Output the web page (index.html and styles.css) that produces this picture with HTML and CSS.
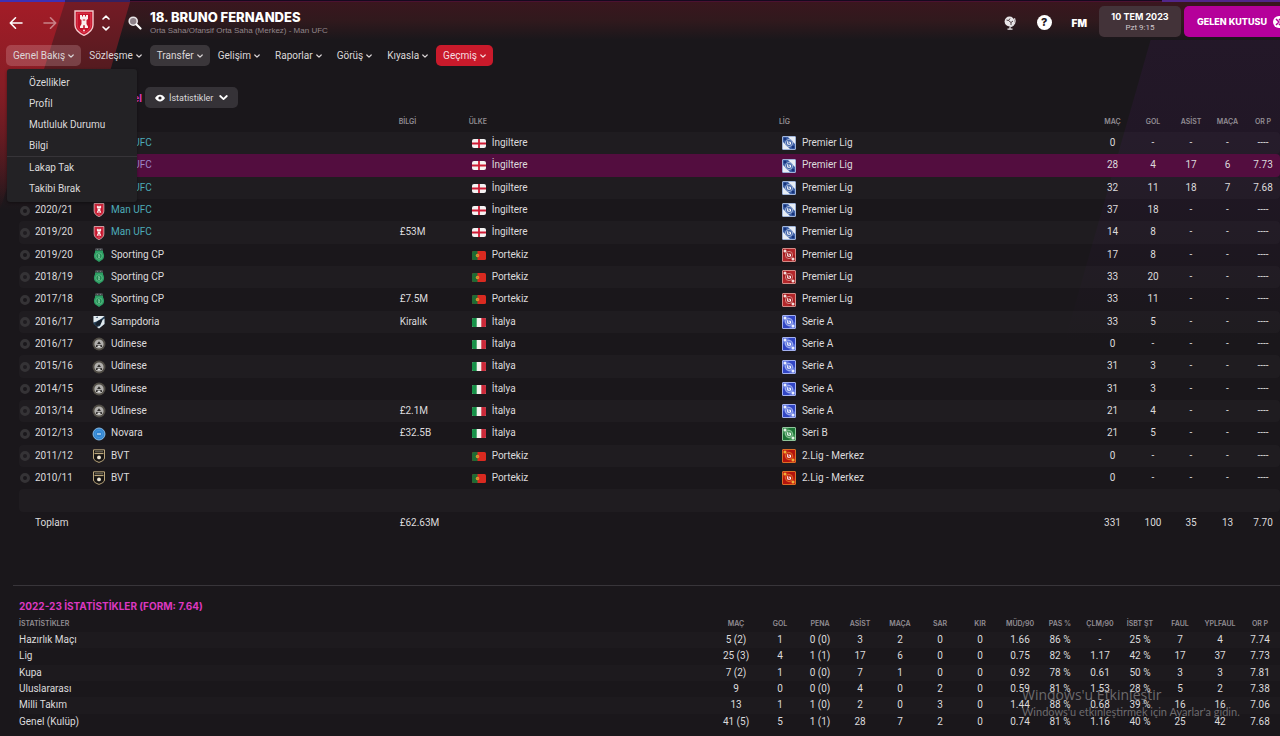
FILE: index.html
```html
<!DOCTYPE html>
<html lang="tr">
<head>
<meta charset="utf-8">
<title>Bruno Fernandes - Geçmiş</title>
<meta name="viewport" content="width=device-width, initial-scale=1">
<link rel="stylesheet" href="styles.css">
</head>
<body>
<svg class="defs" aria-hidden="true">
  <symbol id="chev" viewBox="0 0 6 6"><path d="M.8 2 3 4.1 5.2 2" fill="none" stroke="currentColor" stroke-width="1.2" stroke-linecap="round" stroke-linejoin="round"/></symbol>
  <symbol id="united" viewBox="0 0 20 26"><path d="M1 1h18v14c0 5-4 8-9 10.300C5 23 1 20 1 15z" fill="#c5122b" stroke="#f3c9cc" stroke-width="1.400"/><path d="M3.200 3.200h13.600v11.500c0 4-3 6.300-6.800 8.100-3.800-1.800-6.800-4.100-6.800-8.100z" fill="none" stroke="#ea5a68" stroke-width=".6"/><path d="M6 5h2v1.500h1V5h2v1.500h1V5h2v4l-1.500 1v4l1.500 2.500V18H6v-1.500L7.500 14v-4L6 9z" fill="#fbeeee"/><path d="M9.200 18v-2.500q.8-1 1.600 0V18zM8.800 9.500h2.400v.9H8.800z" fill="#c5122b"/><circle cx="10" cy="20.500" r=".9" fill="#fbeeee"/></symbol>
  <symbol id="sporting" viewBox="0 0 14 14"><path d="M3.500.5h7v1.800h-7z" fill="#777b80"/><path d="M4 1.300h1m1 0h2m1 0h1" stroke="#23282a" stroke-width=".7"/><path d="M3 2.500h8v1.800c1.400 2 1.500 5.200 0 7L7 14l-4-2.700c-1.500-1.800-1.400-5 0-7z" fill="#2c9e63"/><circle cx="7" cy="8" r="3.200" fill="#238b54" stroke="#7cd09e" stroke-width=".6"/><path d="M6 6.300h1.300l.8 1-.8.6.9 1.800H6l.6-1.600z" fill="#8bd6ab"/></symbol>
  <symbol id="samp" viewBox="0 0 14 14"><path d="M1.500 1h11v8L7 13.500 1.500 9z" fill="#29445d"/><path d="M1.500 1h11L9 4 4.500 6.500l-3 1z" fill="#e6edf1"/><path d="m3 9 3-3 4-2 .8 3L8 10l-3 1z" fill="#16202c"/><path d="m10.500 5 2-1.600V9L7 13.500l-2-1.600 3-1z" fill="#dfe8ed"/><path d="m3.500 2.500 2-1 .5 1.500z" fill="#29445d"/></symbol>
  <symbol id="udinese" viewBox="0 0 14 14"><circle cx="7" cy="7" r="6.500" fill="#514d46"/><circle cx="7" cy="7" r="4.600" fill="#b2b0ad"/><path d="M4 8.500 7 4.300l3 4.200v1.600H8.600L7 7.800l-1.600 2.300H4z" fill="#2e2c2a"/><path d="M4.500 7.700h5M5.600 9.500h2.800" stroke="#eee" stroke-width=".8"/></symbol>
  <symbol id="novara" viewBox="0 0 14 14"><circle cx="7" cy="7" r="6" fill="#3687d0" stroke="#8dc3ef" stroke-width=".9"/><circle cx="7" cy="7" r="3.700" fill="#2d83d2" stroke="#5ba7e5" stroke-width=".5"/><path d="M5 6.400h4v1.200H5z" fill="#d4e6f5"/></symbol>
  <symbol id="bvt" viewBox="0 0 14 14"><path d="M1.500.8h11v8.200c0 2-2.500 3.300-5.500 4.400C4 12.300 1.500 11 1.500 9z" fill="#171514" stroke="#bba77c" stroke-width="1"/><path d="M2.500 3.800h9v1.300h-9z" fill="#bba77c"/><path d="M3.500 2.400h1m1 0h1m1 0h1m1 0h1" stroke="#d8cfb8" stroke-width=".8"/><circle cx="7" cy="8.400" r="1.900" fill="#eee6d4"/></symbol>
  <symbol id="eng" viewBox="0 0 14 9"><rect width="14" height="9" rx="2" fill="#f4f2f2"/><path d="M7 0v9M0 4.500h14" stroke="#cf1b35" stroke-width="1.800"/></symbol>
  <symbol id="por" viewBox="0 0 14 9"><rect width="14" height="9" rx="1.500" fill="#d92a20"/><path d="M5.500 0v9h-4A1.500 1.500 0 0 1 0 7.500v-6A1.500 1.500 0 0 1 1.500 0z" fill="#1d6b34"/><circle cx="5.500" cy="4.500" r="1.700" fill="#d6a428"/><circle cx="5.500" cy="4.500" r=".8" fill="#e4564d"/></symbol>
  <symbol id="ita" viewBox="0 0 14 9"><rect width="14" height="9" rx="1.500" fill="#f2f2ee"/><path d="M4.700 0v9H1.500A1.500 1.500 0 0 1 0 7.500v-6A1.500 1.500 0 0 1 1.500 0z" fill="#179148"/><path d="M9.300 0v9h3.200A1.500 1.500 0 0 0 14 7.500v-6A1.500 1.500 0 0 0 12.500 0z" fill="#cb2a3a"/></symbol>
  <symbol id="league" viewBox="0 0 14 14"><rect x=".5" y=".5" width="13" height="13" rx=".5" class="lg-base"/><path d="M6 1h7v7zM1 6v7h7z" class="lg-corner"/><circle cx="7" cy="7" r="3.600" class="lg-ring"/><path d="M5.700 5.200v3h2.800V6.200H6.800" class="lg-mark"/><circle cx="3" cy="3" r="1.500" class="lg-dot"/><circle cx="11" cy="11" r="1.500" class="lg-dot"/></symbol>
</svg>

<svg class="backdrop" viewBox="0 0 1280 736" preserveAspectRatio="none" aria-hidden="true">
  <defs>
    <linearGradient id="gTop" x2="0" y2="1"><stop offset="0" stop-color="#3a161e"/><stop offset=".5" stop-color="#30191d"/><stop offset="1" stop-color="#1a171b"/></linearGradient>
    <linearGradient id="gRed" x2="0" y2="1"><stop offset="0" stop-color="#a31c27"/><stop offset=".4" stop-color="#861d25"/><stop offset="1" stop-color="#861d25" stop-opacity="0"/></linearGradient>
    <linearGradient id="gRed2" x2="0" y2="1"><stop offset="0" stop-color="#741b25"/><stop offset=".3" stop-color="#571b20"/><stop offset="1" stop-color="#571b20" stop-opacity="0"/></linearGradient>
    <linearGradient id="gPur" x2="0" y2="1"><stop offset="0" stop-color="#241829"/><stop offset=".4" stop-color="#211726"/><stop offset="1" stop-color="#211726" stop-opacity="0"/></linearGradient>
  </defs>
  <path d="M1162 0h118v340H1065z" fill="url(#gPur)"/>
  <path d="M0 2h1280v38H0z" fill="url(#gTop)"/>
  <path d="M0 2h130L70 210H0z" fill="url(#gRed2)"/>
  <path d="M0 2h65L0 210z" fill="url(#gRed)"/>
  <path d="M0 0h1280v1H0z" fill="#16081f"/><path d="M0 1h1280v1H0z" fill="#4b1130"/>
  <path d="M0 0h65v2H0z" fill="#4030b4"/><path d="M65 0h65v2H65z" fill="#352060"/><path d="M1162 0h118v2h-118z" fill="#51268a"/>
</svg>

<header class="topbar">
  <button class="icon-btn nav-btn" aria-label="Geri"><svg width="14" height="14" viewBox="0 0 14 14"><path d="M13 7H1.500M6.500 1.800 1.300 7l5.200 5.200" class="line"/></svg></button>
  <button class="icon-btn nav-btn fwd" aria-label="İleri"><svg width="14" height="14" viewBox="0 0 14 14"><path d="M1 7h11.500M7.500 1.800 12.700 7l-5.200 5.200" class="line"/></svg></button>
  <svg class="badge" width="20" height="26"><use href="#united"/></svg>
  <button class="icon-btn sorter" aria-label="Önceki veya sonraki oyuncu"><svg width="8" height="16" viewBox="0 0 8 16"><path d="m1 4 3-2.800L7 4M1 12l3 2.800L7 12" class="line"/></svg></button>
  <button class="icon-btn search" aria-label="Ara"><svg width="14" height="14" viewBox="0 0 14 14"><circle cx="5.200" cy="5.200" r="4" fill="#8d8188" stroke="#e8e4e6" stroke-width="1.600"/><path d="m8.500 8.500 4 4" stroke="#fff" stroke-width="2.200" stroke-linecap="round"/></svg></button>
  <div class="who">
    <h1>18. BRUNO FERNANDES</h1>
    <p>Orta Saha/Ofansif Orta Saha (Merkez) - Man UFC</p>
  </div>
  <div class="tools">
    <button class="icon-btn" aria-label="Dünya"><svg width="14" height="14" viewBox="0 0 14 14"><circle cx="6.500" cy="5.500" r="4.900" fill="#e9e6e8"/><path d="m3.500 4 2 .5L7 2.500M5.500 4.500l2.500 2 2-1.500M8 6.500V9" stroke="#3b2a30" fill="none" stroke-width=".9"/><path d="M11.500 2.200c1.300 3 .5 7.300-4.500 8.800v1.800M4.500 13.100h5" fill="none" stroke="#e9e6e8" stroke-width="1.200"/></svg></button>
    <button class="icon-btn help" aria-label="Yardım">?</button>
    <button class="icon-btn fm">FM</button>
  </div>
  <div class="actions">
    <button class="date"><strong>10 TEM 2023</strong><span>Pzt 9:15</span></button>
    <button class="inbox"><span>GELEN KUTUSU</span><svg width="14" height="14" viewBox="0 0 14 14"><circle cx="7" cy="7" r="6" fill="#fff"/><path d="m4 4 3 3-3 3M7 4l3 3-3 3" fill="none" stroke="#b5009a" stroke-width="1.500"/></svg></button>
  </div>
</header>

<nav class="tabs">
  <div class="tab-wrap">
    <button class="tab open" aria-expanded="true">Genel Bakış<svg><use href="#chev"/></svg></button>
    <div class="menu">
      <a href="#">Özellikler</a><a href="#">Profil</a><a href="#">Mutluluk Durumu</a><a href="#">Bilgi</a>
      <hr>
      <a href="#">Lakap Tak</a><a href="#">Takibi Bırak</a>
    </div>
  </div>
  <button class="tab">Sözleşme<svg><use href="#chev"/></svg></button>
  <button class="tab soft">Transfer<svg><use href="#chev"/></svg></button>
  <button class="tab">Gelişim<svg><use href="#chev"/></svg></button>
  <button class="tab">Raporlar<svg><use href="#chev"/></svg></button>
  <button class="tab">Görüş<svg><use href="#chev"/></svg></button>
  <button class="tab">Kıyasla<svg><use href="#chev"/></svg></button>
  <button class="tab active">Geçmiş<svg><use href="#chev"/></svg></button>
</nav>

<main>
  <div class="subhead">
    <h2>Genel</h2>
    <button class="view"><svg width="10" height="8" viewBox="0 0 10 8"><path d="M0 4c2.500-4.500 7.500-4.500 10 0-2.500 4.500-7.500 4.500-10 0z" fill="#fff"/><circle cx="5" cy="4" r="1.600" fill="#2c272c"/></svg>İstatistikler<svg width="9" height="9" class="down"><use href="#chev"/></svg></button>
  </div>

  <table class="history">
    <colgroup><col class="c-season"><col class="c-club"><col class="c-info"><col class="c-land"><col><col class="c-mac"><col class="c-gol"><col class="c-asist"><col class="c-maca"><col class="c-orp"></colgroup>
    <thead><tr><th></th><th></th><th>BİLGİ</th><th>ÜLKE</th><th>LİG</th><th>MAÇ</th><th>GOL</th><th>ASİST</th><th>MAÇA</th><th>OR P</th></tr></thead>
    <tbody>
      <tr><td><i class="dot"></i></td><td class="mine"><svg class="crest"><use href="#united"/></svg>Man UFC</td><td></td><td><svg class="flag"><use href="#eng"/></svg>İngiltere</td><td><svg class="lg navy"><use href="#league"/></svg>Premier Lig</td><td>0</td><td>-</td><td>-</td><td>-</td><td>----</td></tr>
      <tr class="sel"><td><i class="dot"></i></td><td class="mine"><svg class="crest"><use href="#united"/></svg>Man UFC</td><td></td><td><svg class="flag"><use href="#eng"/></svg>İngiltere</td><td><svg class="lg navy"><use href="#league"/></svg>Premier Lig</td><td>28</td><td>4</td><td>17</td><td>6</td><td>7.73</td></tr>
      <tr><td><i class="dot"></i></td><td class="mine"><svg class="crest"><use href="#united"/></svg>Man UFC</td><td></td><td><svg class="flag"><use href="#eng"/></svg>İngiltere</td><td><svg class="lg navy"><use href="#league"/></svg>Premier Lig</td><td>32</td><td>11</td><td>18</td><td>7</td><td>7.68</td></tr>
      <tr><td><i class="dot"></i>2020/21</td><td class="mine"><svg class="crest"><use href="#united"/></svg>Man UFC</td><td></td><td><svg class="flag"><use href="#eng"/></svg>İngiltere</td><td><svg class="lg navy"><use href="#league"/></svg>Premier Lig</td><td>37</td><td>18</td><td>-</td><td>-</td><td>----</td></tr>
      <tr><td><i class="dot"></i>2019/20</td><td class="mine"><svg class="crest"><use href="#united"/></svg>Man UFC</td><td>£53M</td><td><svg class="flag"><use href="#eng"/></svg>İngiltere</td><td><svg class="lg navy"><use href="#league"/></svg>Premier Lig</td><td>14</td><td>8</td><td>-</td><td>-</td><td>----</td></tr>
      <tr><td><i class="dot"></i>2019/20</td><td><svg class="crest"><use href="#sporting"/></svg>Sporting CP</td><td></td><td><svg class="flag"><use href="#por"/></svg>Portekiz</td><td><svg class="lg red"><use href="#league"/></svg>Premier Lig</td><td>17</td><td>8</td><td>-</td><td>-</td><td>----</td></tr>
      <tr><td><i class="dot"></i>2018/19</td><td><svg class="crest"><use href="#sporting"/></svg>Sporting CP</td><td></td><td><svg class="flag"><use href="#por"/></svg>Portekiz</td><td><svg class="lg red"><use href="#league"/></svg>Premier Lig</td><td>33</td><td>20</td><td>-</td><td>-</td><td>----</td></tr>
      <tr><td><i class="dot"></i>2017/18</td><td><svg class="crest"><use href="#sporting"/></svg>Sporting CP</td><td>£7.5M</td><td><svg class="flag"><use href="#por"/></svg>Portekiz</td><td><svg class="lg red"><use href="#league"/></svg>Premier Lig</td><td>33</td><td>11</td><td>-</td><td>-</td><td>----</td></tr>
      <tr><td><i class="dot"></i>2016/17</td><td><svg class="crest"><use href="#samp"/></svg>Sampdoria</td><td>Kiralık</td><td><svg class="flag"><use href="#ita"/></svg>İtalya</td><td><svg class="lg blue"><use href="#league"/></svg>Serie A</td><td>33</td><td>5</td><td>-</td><td>-</td><td>----</td></tr>
      <tr><td><i class="dot"></i>2016/17</td><td><svg class="crest"><use href="#udinese"/></svg>Udinese</td><td></td><td><svg class="flag"><use href="#ita"/></svg>İtalya</td><td><svg class="lg blue"><use href="#league"/></svg>Serie A</td><td>0</td><td>-</td><td>-</td><td>-</td><td>----</td></tr>
      <tr><td><i class="dot"></i>2015/16</td><td><svg class="crest"><use href="#udinese"/></svg>Udinese</td><td></td><td><svg class="flag"><use href="#ita"/></svg>İtalya</td><td><svg class="lg blue"><use href="#league"/></svg>Serie A</td><td>31</td><td>3</td><td>-</td><td>-</td><td>----</td></tr>
      <tr><td><i class="dot"></i>2014/15</td><td><svg class="crest"><use href="#udinese"/></svg>Udinese</td><td></td><td><svg class="flag"><use href="#ita"/></svg>İtalya</td><td><svg class="lg blue"><use href="#league"/></svg>Serie A</td><td>31</td><td>3</td><td>-</td><td>-</td><td>----</td></tr>
      <tr><td><i class="dot"></i>2013/14</td><td><svg class="crest"><use href="#udinese"/></svg>Udinese</td><td>£2.1M</td><td><svg class="flag"><use href="#ita"/></svg>İtalya</td><td><svg class="lg blue"><use href="#league"/></svg>Serie A</td><td>21</td><td>4</td><td>-</td><td>-</td><td>----</td></tr>
      <tr><td><i class="dot"></i>2012/13</td><td><svg class="crest"><use href="#novara"/></svg>Novara</td><td>£32.5B</td><td><svg class="flag"><use href="#ita"/></svg>İtalya</td><td><svg class="lg green"><use href="#league"/></svg>Seri B</td><td>21</td><td>5</td><td>-</td><td>-</td><td>----</td></tr>
      <tr><td><i class="dot"></i>2011/12</td><td><svg class="crest"><use href="#bvt"/></svg>BVT</td><td></td><td><svg class="flag"><use href="#por"/></svg>Portekiz</td><td><svg class="lg orange"><use href="#league"/></svg>2.Lig - Merkez</td><td>0</td><td>-</td><td>-</td><td>-</td><td>----</td></tr>
      <tr><td><i class="dot"></i>2010/11</td><td><svg class="crest"><use href="#bvt"/></svg>BVT</td><td></td><td><svg class="flag"><use href="#por"/></svg>Portekiz</td><td><svg class="lg orange"><use href="#league"/></svg>2.Lig - Merkez</td><td>0</td><td>-</td><td>-</td><td>-</td><td>----</td></tr>
      <tr><td></td><td></td><td></td><td></td><td></td><td></td><td></td><td></td><td></td><td></td></tr>
      <tr class="total"><td>Toplam</td><td></td><td>£62.63M</td><td></td><td></td><td>331</td><td>100</td><td>35</td><td>13</td><td>7.70</td></tr>
    </tbody>
  </table>

  <section class="season">
    <h2>2022-23 İSTATİSTİKLER (FORM: 7.64)</h2>
    <table class="stats">
      <colgroup><col><col class="c-first"><col class="c-n" span="13"></colgroup>
      <thead><tr><th>İSTATİSTİKLER</th><th>MAÇ</th><th>GOL</th><th>PENA</th><th>ASİST</th><th>MAÇA</th><th>SAR</th><th>KIR</th><th>MÜD/90</th><th>PAS %</th><th>ÇLM/90</th><th>İSBT ŞT</th><th>FAUL</th><th>YPLFAUL</th><th>OR P</th></tr></thead>
      <tbody>
        <tr><td>Hazırlık Maçı</td><td>5 (2)</td><td>1</td><td>0 (0)</td><td>3</td><td>2</td><td>0</td><td>0</td><td>1.66</td><td>86 %</td><td>-</td><td>25 %</td><td>7</td><td>4</td><td>7.74</td></tr>
        <tr><td>Lig</td><td>25 (3)</td><td>4</td><td>1 (1)</td><td>17</td><td>6</td><td>0</td><td>0</td><td>0.75</td><td>82 %</td><td>1.17</td><td>42 %</td><td>17</td><td>37</td><td>7.73</td></tr>
        <tr><td>Kupa</td><td>7 (2)</td><td>1</td><td>0 (0)</td><td>7</td><td>1</td><td>0</td><td>0</td><td>0.92</td><td>78 %</td><td>0.61</td><td>50 %</td><td>3</td><td>3</td><td>7.81</td></tr>
        <tr><td>Uluslararası</td><td>9</td><td>0</td><td>0 (0)</td><td>4</td><td>0</td><td>2</td><td>0</td><td>0.59</td><td>81 %</td><td>1.53</td><td>28 %</td><td>5</td><td>2</td><td>7.38</td></tr>
        <tr><td>Milli Takım</td><td>13</td><td>1</td><td>1 (0)</td><td>2</td><td>0</td><td>3</td><td>0</td><td>1.44</td><td>88 %</td><td>0.68</td><td>39 %</td><td>16</td><td>16</td><td>7.06</td></tr>
        <tr><td>Genel (Kulüp)</td><td>41 (5)</td><td>5</td><td>1 (1)</td><td>28</td><td>7</td><td>2</td><td>0</td><td>0.74</td><td>81 %</td><td>1.16</td><td>40 %</td><td>25</td><td>42</td><td>7.68</td></tr>
      </tbody>
    </table>
  </section>
</main>

<aside class="activate">
  <strong>Windows'u Etkinleştir</strong>
  <span>Windows'u etkinleştirmek için Ayarlar'a gidin.</span>
</aside>
</body>
</html>
```
FILE: styles.css
```css
* { box-sizing: border-box; }
html, body { min-height: 100%; }
body {
  margin: 0;
  min-height: 100vh;
  position: relative;
  overflow: hidden;
  background: #1a171b;
  color: #dcdadc;
  font: 10px/14px Roboto, "Liberation Sans", sans-serif;
}
button { margin: 0; padding: 0; border: 0; background: none; color: inherit; font: inherit; cursor: pointer; }
a { color: inherit; text-decoration: none; }
h1, h2, p { margin: 0; }
.defs { position: absolute; width: 0; height: 0; }
.backdrop { position: absolute; inset: 0; width: 100%; height: 100%; z-index: -1; }
.line { fill: none; stroke: #fff; stroke-width: 1.6; stroke-linecap: round; stroke-linejoin: round; }

/* Top bar */
.topbar { display: flex; align-items: center; height: 45px; padding-left: 9px; white-space: nowrap; overflow: hidden; }
.icon-btn { display: flex; align-items: center; justify-content: center; flex: none; }
.fwd { margin-left: 20px; opacity: .45; }
.badge { flex: none; margin-left: 17px; }
.sorter { margin-left: 8px; }
.search { margin-left: 18px; }
.who { margin: 2px auto 0 8px; }
.who h1 { color: #fff; font: 800 13px/15px Inter, sans-serif; }
.who p { color: #91868b; font: 8px/12px "Liberation Sans", sans-serif; }
.tools { display: flex; align-items: center; gap: 20px; }
.help { width: 15px; height: 15px; border-radius: 50%; background: #fff; color: #241a1f; font: 800 11px/15px Inter, sans-serif; }
.fm { color: #fff; font: 900 10px/14px Inter, sans-serif; }
.actions { display: flex; gap: 3px; margin: -2px -6px 0 12px; }
.date { display: flex; flex-direction: column; align-items: center; justify-content: center; width: 82px; height: 31px; border-radius: 5px; background: #433339; color: #d0c8cc; font-size: 8px; line-height: 11px; }
.date strong { color: #fff; font: 700 9px/11px Inter, sans-serif; }
.inbox { display: flex; align-items: center; gap: 5px; height: 31px; padding: 0 0 0 13px; border-radius: 5px; background: #b5009a; color: #fff; font: 800 9px/12px Inter, sans-serif; }

/* Section tabs */
.tabs { display: flex; gap: 1px; padding-left: 6px; height: 21px; white-space: nowrap; }
.tab { display: flex; align-items: center; gap: 3px; height: 21px; padding: 0 7px; border-radius: 5px; color: #dcd7d9; }
.tab svg { width: 6px; height: 6px; }
.tab.open { background: rgba(255, 220, 225, .2); }
.tab.soft { background: #3a363a; }
.tab.active { background: #c91a2b; color: #f6dfe0; }
.tab-wrap { position: relative; }
.menu { position: absolute; left: 1px; top: 24px; z-index: 2; width: 130px; padding: 3px 0; border-radius: 3px; background: #232225; box-shadow: 0 1px 3px rgba(0, 0, 0, .4); }
.menu a { display: block; padding-left: 22px; line-height: 21px; }
.menu hr { margin: 0; border: 0; border-top: 1px solid #363438; }

/* Sub header */
.subhead { display: flex; align-items: center; gap: 3px; padding: 21px 0 3px 19px; }
.subhead h2 { width: 123px; text-align: right; color: #dc38c0; font: 700 10px/14px Inter, sans-serif; }
.view { display: flex; align-items: center; gap: 4px; height: 21px; padding: 0 10px; border-radius: 5px; background: #353237; font-size: 9px; }
.view .down { margin-left: 2px; color: #fff; }

/* Tables */
table { border-collapse: separate; border-spacing: 0; table-layout: fixed; white-space: nowrap; }
th { padding: 0; text-align: left; color: #928d93; font: 600 7px/10px Inter, sans-serif; }
td { padding: 0; }
td svg { vertical-align: middle; }
.history { width: calc(100% - 19px); height: 423px; margin-left: 19px; }
.history th { height: 21px; }
.history td { height: 22px; }
.c-season { width: 72px; }
.c-club { width: 24.4%; }
.c-info { width: 70px; }
.c-land { width: 24.6%; }
.c-mac { width: 41px; }
.c-gol { width: 40px; }
.c-asist { width: 36px; }
.c-maca { width: 37px; }
.c-orp { width: 34px; }
.history tbody tr:nth-child(odd) td { background: rgba(255, 255, 255, .025); }
.history tbody tr.sel td { background: #530d3f; }
.history td:first-child { border-radius: 4px 0 0 4px; }
.history td:last-child { border-radius: 0 4px 4px 0; }
.history td:nth-child(3) { padding-left: 1px; }
.history td:nth-child(4), .history td:nth-child(5) { padding-left: 3px; }
.history th:nth-child(n+6), .history td:nth-child(n+6), .stats th:nth-child(n+2), .stats td:nth-child(n+2) { text-align: center; }
.mine { color: #4cabb9; }
.sel .mine { color: #9b86c8; }
.total td:first-child { padding-left: 16px; }
.dot { display: inline-block; width: 10px; height: 10px; margin: 0 5px 0 1px; border: 3px solid #353336; border-radius: 50%; vertical-align: middle; }
.crest { width: 14px; height: 14px; margin: 0 5px 0 1px; }
.flag { width: 14px; height: 9px; margin-right: 6px; }
.lg { width: 14px; height: 14px; margin-right: 6px; }
.lg-base { fill: var(--deep); stroke: var(--edge); }
.lg-corner { fill: var(--corner); }
.lg-ring { fill: var(--deep); stroke: var(--edge); stroke-width: 1; }
.lg-mark { fill: none; stroke: #fff; stroke-width: 1; }
.lg-dot { fill: var(--spot); }
.navy { --deep: #3f62a8; --edge: #9fb3d8; --corner: #e8eef6; --spot: #17337a; }
.red { --deep: #a3191d; --edge: #d38a86; --corner: #b3262a; --spot: #f3dcda; }
.blue { --deep: #5c73dc; --edge: #a3b0f0; --corner: #3145c4; --spot: #e9edff; }
.green { --deep: #3f9154; --edge: #8fc59b; --corner: #1d7436; --spot: #e3f3e4; }
.orange { --deep: #c42012; --edge: #dc6d25; --corner: #b3130d; --spot: #f0b03a; }
.orange .lg-mark { stroke: #f0b03a; }

/* Season statistics */
.season { margin: 51px 0 0 13px; padding: 13px 0 0 6px; border-top: 1px solid #38353a; }
.season h2 { color: #dc38c0; font: 700 10px/14px Inter, sans-serif; }
.stats { width: 100%; height: 114px; margin-top: 3px; }
.stats th, .stats td { height: 16px; }
.c-first { width: 48px; }
.c-n { width: 40px; }
.stats tbody tr:nth-child(odd) td { background: rgba(255, 255, 255, .015); }

.activate { position: absolute; right: 36px; bottom: 17px; display: flex; flex-direction: column; width: 222px; color: rgba(190, 190, 190, .5); font-family: "Open Sans", "Noto Sans", sans-serif; white-space: nowrap; pointer-events: none; }
.activate strong { font-size: 14px; font-weight: 400; line-height: 18px; }
.activate span { font: 11px/15px Lato, sans-serif; }
```
